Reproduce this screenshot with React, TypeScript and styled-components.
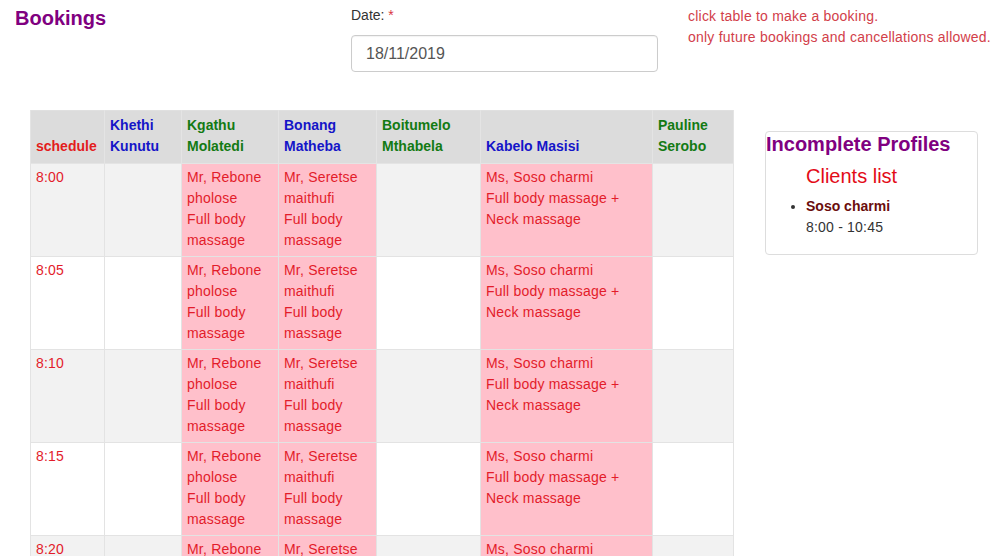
import React from "react";
import styled, { createGlobalStyle } from "styled-components";

const Global = createGlobalStyle`
  html, body { margin: 0; padding: 0; background: #fff; }
  body {
    font-family: "Liberation Sans", Arial, Helvetica, sans-serif;
    font-size: 14px;
    line-height: 21px;
    color: #333;
  }
  * { box-sizing: border-box; }
`;

const Page = styled.div`
  height: 556px;
  overflow: hidden;
`;

const Header = styled.header`
  display: grid;
  grid-template-columns: 336px 337px 1fr;
  padding: 5px 0 0 15px;
`;

const Title = styled.h1`
  margin: 2px 0 0;
  font-size: 20px;
  line-height: 22px;
  font-weight: bold;
  color: #800080;
`;

const DateGroup = styled.div`
  width: 307px;
`;

const Label = styled.label`
  display: block;
  margin-bottom: 9px;
  color: #333;
`;

const Req = styled.span`
  color: #d9343f;
`;

const DateInput = styled.input`
  display: block;
  width: 100%;
  height: 37px;
  padding: 0 14px;
  font-family: inherit;
  font-size: 16px;
  color: #555;
  border: 1px solid #ccc;
  border-radius: 4px;
  box-shadow: inset 0 1px 1px rgba(0, 0, 0, 0.05);
  outline: none;
`;

const Notes = styled.div`
  color: #d2404a;
  padding-top: 1px;
  letter-spacing: 0.22px;
  white-space: nowrap;
`;

const Main = styled.main`
  display: flex;
  align-items: flex-start;
  gap: 31px;
  padding-left: 30px;
  margin-top: 38px;
`;

const Table = styled.table`
  width: 703px;
  border-collapse: collapse;
  table-layout: fixed;
  border: 1px solid #e0e0e0;
`;

const Th = styled.th<{ $c: string }>`
  background: #dcdcdc;
  color: ${(p) => p.$c};
  font-weight: bold;
  text-align: left;
  vertical-align: bottom;
  padding: 4px 5px 6px;
  border: 1px solid #e4e4e4;
  border-top: none;
`;

const Tr = styled.tr<{ $odd: boolean }>`
  background: ${(p) => (p.$odd ? "#f2f2f2" : "#fff")};
`;

const Td = styled.td<{ $booked?: boolean }>`
  vertical-align: top;
  padding: 3px 5px 5px;
  height: 93px;
  color: #e31c2a;
  letter-spacing: 0.2px;
  border: 1px solid #e3e3e3;
  background: ${(p) => (p.$booked ? "#ffc0cb" : "transparent")};
`;

const Panel = styled.aside`
  width: 213px;
  margin-top: 21px;
  border: 1px solid #ddd;
  border-radius: 4px;
  padding-bottom: 16px;
`;

const PanelTitle = styled.h3`
  margin: 1px 0 0;
  font-size: 20px;
  line-height: 22px;
  font-weight: bold;
  color: #800080;
`;

const ClientsBlock = styled.div`
  margin: 10px 0 0;
  padding-left: 40px;
`;

const ClientsHead = styled.h4`
  margin: 0 0 9px;
  font-size: 20px;
  line-height: 22px;
  font-weight: normal;
  color: #e30b17;
`;

const Clients = styled.ul`
  margin: 0;
  padding-left: 0;
  list-style: disc;
`;

const ClientName = styled.strong`
  display: block;
  color: #6b0d0d;
`;

const ClientTime = styled.span`
  color: #333;
  letter-spacing: 0.2px;
`;

const cols: { name: React.ReactNode; color: string; w: number }[] = [
  { name: "schedule", color: "#e31c1c", w: 74 },
  { name: <>Khethi<br />Kunutu</>, color: "#1515c8", w: 77 },
  { name: <>Kgathu<br />Molatedi</>, color: "#137a13", w: 97 },
  { name: <>Bonang<br />Matheba</>, color: "#1515c8", w: 98 },
  { name: <>Boitumelo<br />Mthabela</>, color: "#137a13", w: 104 },
  { name: "Kabelo Masisi", color: "#1515c8", w: 172 },
  { name: <>Pauline<br />Serobo</>, color: "#137a13", w: 81 },
];

const times = ["8:00", "8:05", "8:10", "8:15", "8:20"];

const Booking = ({ who, what }: { who: string; what: string }) => (
  <>
    <div>{who}</div>
    <div>{what}</div>
  </>
);

export default function App() {
  return (
    <Page>
      <Global />
      <Header>
        <Title>Bookings</Title>
        <DateGroup>
          <Label>
            Date: <Req>*</Req>
          </Label>
          <DateInput defaultValue="18/11/2019" readOnly />
        </DateGroup>
        <Notes>
          click table to make a booking.
          <br />
          only future bookings and cancellations allowed.
        </Notes>
      </Header>
      <Main>
        <Table>
          <colgroup>
            {cols.map((c, i) => (
              <col key={i} style={{ width: c.w }} />
            ))}
          </colgroup>
          <thead>
            <tr>
              {cols.map((c, i) => (
                <Th key={i} $c={c.color}>
                  {c.name}
                </Th>
              ))}
            </tr>
          </thead>
          <tbody>
            {times.map((t, i) => (
              <Tr key={t} $odd={i % 2 === 0}>
                <Td>{t}</Td>
                <Td />
                <Td $booked>
                  <Booking who="Mr, Rebone pholose" what="Full body massage" />
                </Td>
                <Td $booked>
                  <Booking who="Mr, Seretse maithufi" what="Full body massage" />
                </Td>
                <Td />
                <Td $booked>
                  <Booking who="Ms, Soso charmi" what="Full body massage + Neck massage" />
                </Td>
                <Td />
              </Tr>
            ))}
          </tbody>
        </Table>
        <Panel>
          <PanelTitle>Incomplete Profiles</PanelTitle>
          <ClientsBlock>
            <ClientsHead>Clients list</ClientsHead>
            <Clients>
              <li>
                <ClientName>Soso charmi</ClientName>
                <ClientTime>8:00 - 10:45</ClientTime>
              </li>
            </Clients>
          </ClientsBlock>
        </Panel>
      </Main>
    </Page>
  );
}
